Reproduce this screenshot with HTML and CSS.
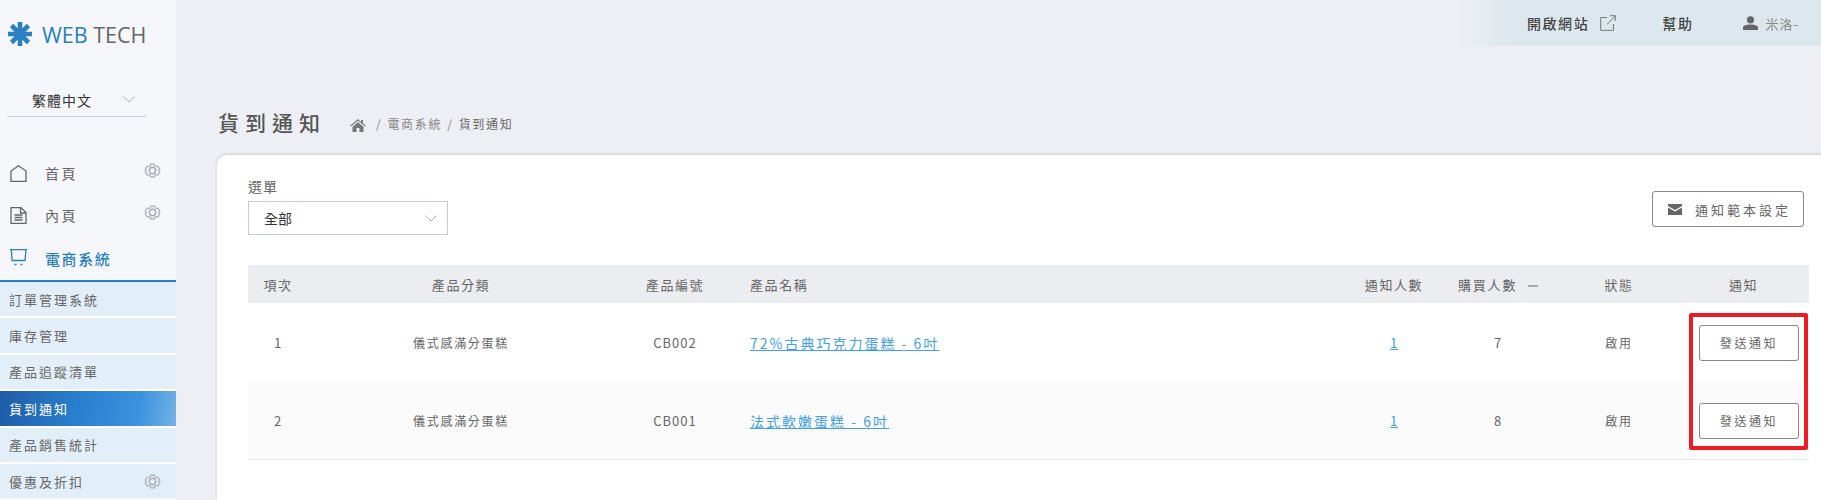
FILE: index.html
```html
<!DOCTYPE html>
<html lang="zh-Hant">
<head>
  <meta charset="UTF-8">
  <title>貨到通知</title>
  <link rel="stylesheet" href="styles.css">
</head>
<body>
  <svg class="defs" width="0" height="0">
    <symbol id="gear" viewBox="0 0 16 16">
      <path d="M5.800.8h4.400l.6 2 1.300.7 2-.5 2.100 3.700-1.500 1.300 1.500 1.300-2.100 3.700-2-.5-1.300.7-.6 2H5.800l-.6-2-1.300-.7-2 .5L-.2 9.300 1.300 8-.2 6.700 1.900 3l2 .5 1.300-.7z" transform="translate(1.300 1.300) scale(.84)" fill="none" stroke="currentColor" stroke-width="1.300"/>
      <circle cx="8" cy="8" r="3" fill="none" stroke="currentColor" stroke-width="1.300"/>
    </symbol>
    <symbol id="chevron" viewBox="0 0 12 7">
      <path d="M.5.5 6 6l5.500-5.500" fill="none" stroke="currentColor"/>
    </symbol>
  </svg>

  <!-- Sidebar -->
  <aside class="sidebar">
    <div class="logo">
      <svg class="logo-mark" viewBox="0 0 24 24">
        <g stroke="#2a80c0" stroke-width="4.600">
          <path d="M12 0v24M0 12h24M3.500 3.500l17 17M20.500 3.500l-17 17"/>
        </g>
      </svg>
      <span class="logo-text"><b>WEB</b> TECH</span>
    </div>

    <div class="lang">
      <span>繁體中文</span>
      <svg class="chevron"><use href="#chevron"/></svg>
    </div>

    <nav class="menu">
      <div class="menu-item">
        <svg class="menu-icon" viewBox="0 0 17 17"><path d="M1 6 8.500 .8 16 6v10.300H1z" fill="none" stroke="currentColor" stroke-width="1.300"/></svg>
        <span class="menu-label">首頁</span>
        <svg class="gear"><use href="#gear"/></svg>
      </div>
      <div class="menu-item">
        <svg class="menu-icon" viewBox="0 0 17 17"><path d="M1 .7h10L16 5.500v10.800H1zM10.500 1v5H16M4.500 8h8M4.500 10.500h8M4.500 13h8" fill="none" stroke="currentColor" stroke-width="1.300"/></svg>
        <span class="menu-label">內頁</span>
        <svg class="gear"><use href="#gear"/></svg>
      </div>
      <div class="menu-item current">
        <svg class="menu-icon" viewBox="0 0 17 17"><path d="M0 .6h17M1.300 .6 2 11.500h13L16 .6" fill="none" stroke="currentColor" stroke-width="1.300"/><path d="M4.500 15.500h2M10.500 15.500h2" stroke="currentColor" stroke-width="1.500"/></svg>
        <span class="menu-label">電商系統</span>
      </div>
      <div class="submenu">
        <a class="sub-item">訂單管理系統</a>
        <a class="sub-item">庫存管理</a>
        <a class="sub-item">產品追蹤清單</a>
        <a class="sub-item active">貨到通知</a>
        <a class="sub-item">產品銷售統計</a>
        <a class="sub-item">優惠及折扣<svg class="gear"><use href="#gear"/></svg></a>
      </div>
    </nav>
  </aside>

  <div class="main">
    <!-- Top bar -->
    <header class="topbar">
      <a class="top-link">開啟網站
        <svg class="ext-icon" viewBox="0 0 16 16"><path d="M7 2.500H.7v12.800h12.800V9M7 9.500 15.300.7M10 .7h5.300V6" fill="none" stroke="currentColor"/></svg>
      </a>
      <a class="top-link help">幫助</a>
      <a class="top-user">
        <svg class="user-icon" viewBox="0 0 15 14"><circle cx="7.500" cy="3.800" r="3.600" fill="currentColor"/><path d="M0 14v-2.500C0 9.500 3.500 8.500 7.500 8.500s7.500 1 7.500 3V14z" fill="currentColor"/></svg>
        米洛-
      </a>
    </header>

    <!-- Title -->
    <div class="page-head">
      <h1>貨到通知</h1>
      <div class="crumbs">
        <svg class="home-icon" viewBox="0 0 16 13"><path d="M8 0 0 6.800l.8.800L8 1.700l7.200 5.900.8-.8-3-2.500V1h-2v2z" fill="currentColor"/><path d="M2.500 7.800 8 3.200l5.500 4.600V13H9.500V9h-3v4h-4z" fill="currentColor"/></svg>
        <span class="sep">/</span><span>電商系統</span><span class="sep">/</span><span class="crumb-now">貨到通知</span>
      </div>
    </div>

    <!-- Card -->
    <section class="card">
      <div class="toolbar">
        <div class="filter">
          <label>選單</label>
          <div class="select">
            <span>全部</span>
            <svg class="chevron"><use href="#chevron"/></svg>
          </div>
        </div>
        <button class="btn btn-template">
          <svg class="mail-icon" viewBox="0 0 14 11"><path d="M0 0h14v2L7 6 0 2z" fill="currentColor"/><path d="M0 3.500 7 7.500l7-4V11H0z" fill="currentColor"/></svg>
          通知範本設定
        </button>
      </div>

      <div class="table-wrap">
        <table>
          <colgroup>
            <col class="c-no"><col class="c-cat"><col class="c-code"><col class="c-name">
            <col class="c-notify"><col class="c-buy"><col class="c-state"><col class="c-send">
          </colgroup>
          <thead>
            <tr>
              <th>項次</th>
              <th>產品分類</th>
              <th>產品編號</th>
              <th class="left">產品名稱</th>
              <th>通知人數</th>
              <th class="buy-head">購買人數<i class="dash"></i></th>
              <th>狀態</th>
              <th class="send-head">通知</th>
            </tr>
          </thead>
          <tbody>
            <tr>
              <td>1</td>
              <td class="small">儀式感滿分蛋糕</td>
              <td>CB002</td>
              <td class="left"><a class="name-link">72%古典巧克力蛋糕 - 6吋</a></td>
              <td><a class="num-link">1</a></td>
              <td class="buy">7</td>
              <td class="small">啟用</td>
              <td><button class="btn btn-send">發送通知</button></td>
            </tr>
            <tr class="alt">
              <td>2</td>
              <td class="small">儀式感滿分蛋糕</td>
              <td>CB001</td>
              <td class="left"><a class="name-link">法式軟嫩蛋糕 - 6吋</a></td>
              <td><a class="num-link">1</a></td>
              <td class="buy">8</td>
              <td class="small">啟用</td>
              <td><button class="btn btn-send">發送通知</button></td>
            </tr>
          </tbody>
        </table>
        <div class="highlight"></div>
      </div>
    </section>
  </div>
</body>
</html>
```

FILE: styles.css
```css
html, body {
  margin: 0;
  padding: 0;
  height: 100%;
  overflow: hidden;
}

body {
  display: flex;
  background: #eeeff4;
  color: #555;
  font-family: "Noto Sans CJK TC", "Noto Sans", sans-serif;
  font-size: 13px;
}

.defs {
  position: absolute;
}

/* Sidebar */
.sidebar {
  width: 176px;
  flex: none;
  background: #f6f7fa;
  height: 500px;
  overflow: hidden;
}

.logo {
  display: flex;
  align-items: center;
  gap: 10px;
  padding: 22px 0 0 8px;
  height: 24px;
}

.logo-mark {
  width: 24px;
  height: 24px;
}

.logo-text {
  font-family: "Open Sans", sans-serif;
  font-size: 21.500px;
  color: #666;
  white-space: nowrap;
}

.logo-text b {
  font-weight: 400;
  color: #2a80c0;
}

.lang {
  margin: 37px 30px 0 7px;
  height: 33px;
  border-bottom: 1px solid #c9cbd6;
  display: flex;
  justify-content: space-between;
  align-items: center;
  padding: 0 11px 0 25px;
  font-size: 14px;
  color: #333;
  letter-spacing: 1px;
}

.chevron {
  width: 12px;
  height: 7px;
  color: #b5b8c4;
}

.menu {
  margin-top: 35px;
}

.menu-item {
  display: flex;
  align-items: center;
  height: 42px;
  padding-left: 10px;
  color: #666;
}

.menu-icon {
  width: 17px;
  height: 17px;
  flex: none;
}

.menu-label {
  margin-left: 18px;
  font-size: 14px;
  letter-spacing: 2.600px;
}

.gear {
  width: 17px;
  height: 17px;
  color: #a9acb5;
  margin-left: auto;
  margin-right: 15px;
  margin-top: -5px;
}

.current {
  color: #2a80c0;
}

.current .menu-label {
  font-size: 15px;
  font-weight: 500;
  letter-spacing: 1.600px;
  padding-top: 2px;
}

.submenu {
  border-top: 2px solid #2a7fc4;
  margin-top: 2px;
  display: flex;
  flex-direction: column;
  gap: 2px;
  background: #fff;
}

.sub-item {
  display: flex;
  align-items: center;
  height: 34.400px;
  padding-left: 9px;
  background: #e3eff8;
  color: #666;
  font-size: 13px;
  letter-spacing: 2px;
}

.sub-item .gear {
  margin-top: 0;
}

.sub-item.active {
  color: #fff;
  background: linear-gradient(100deg, #1f5ca6 0%, #2a80d0 45%, #3c92de 78%, #74b2e6 100%);
}

/* Top bar */
.main {
  flex: 1;
  min-width: 0;
}

.topbar {
  height: 46px;
  display: flex;
  justify-content: flex-end;
  align-items: center;
  width: 365px;
  margin-left: auto;
  padding-right: 22px;
  box-sizing: border-box;
  background: linear-gradient(90deg, #eeeff4 0, #dde8ee 55px);
}

.top-link {
  display: flex;
  align-items: center;
  font-size: 14px;
  font-weight: 500;
  letter-spacing: 1.600px;
  color: #444;
}

.ext-icon {
  width: 16px;
  height: 16px;
  margin-left: 11px;
  color: #777;
}

.help {
  margin-left: 46px;
}

.top-user {
  display: flex;
  align-items: center;
  margin-left: 50px;
  font-size: 13px;
  letter-spacing: 1px;
  color: #888;
}

.user-icon {
  width: 15px;
  height: 14px;
  margin-right: 7px;
  color: #666;
}

/* Title and crumbs */
.page-head {
  display: flex;
  align-items: center;
  height: 109px;
  box-sizing: border-box;
  padding: 43px 0 0 42px;
}

h1 {
  margin: 0;
  font-size: 21px;
  font-weight: 500;
  letter-spacing: 6px;
  color: #555;
}

.crumbs {
  display: flex;
  align-items: center;
  margin: 3px 0 0 24px;
  font-size: 12px;
  letter-spacing: 1.700px;
  color: #888;
}

.home-icon {
  width: 16px;
  height: 13px;
  margin: 3px 5px 0 0;
  color: #777;
}

.sep {
  margin: 0 5px;
}

.crumb-now {
  color: #666;
}

/* Card */
.card {
  margin-left: 41px;
  height: 345px;
  padding: 23px 12px 0 31px;
  box-sizing: border-box;
  background: #fff;
  border-top-left-radius: 10px;
  box-shadow: 0 -1px 3px rgba(90, 90, 110, 0.25);
}

.toolbar {
  display: flex;
  justify-content: space-between;
  height: 87px;
}

.filter label {
  display: block;
  font-size: 14px;
  letter-spacing: 1px;
  color: #666;
  line-height: 16px;
  height: 23px;
}

.select {
  width: 200px;
  height: 34px;
  box-sizing: border-box;
  border: 1px solid #c8cad6;
  padding: 0 10px 0 15px;
  display: flex;
  justify-content: space-between;
  align-items: center;
  font-size: 14px;
  color: #333;
}

.btn {
  background: #fff;
  border: 1px solid #888;
  border-radius: 3px;
  font-family: inherit;
  color: #666;
  box-sizing: border-box;
  padding: 0;
}

.btn-template {
  width: 152px;
  height: 36px;
  margin: 13px 5px 0 0;
  font-size: 13px;
  letter-spacing: 3px;
  display: flex;
  align-items: center;
  padding-left: 15px;
}

.mail-icon {
  width: 14px;
  height: 11px;
  margin-right: 13px;
  color: #666;
}

.btn-send {
  width: 100px;
  height: 36px;
  font-size: 12px;
  letter-spacing: 2.600px;
}

/* Table */
.table-wrap {
  position: relative;
}

table {
  width: 100%;
  table-layout: fixed;
  border-collapse: collapse;
}

.c-no { width: 60px; }
.c-cat { width: 306px; }
.c-code { width: 122px; }
.c-notify { width: 100px; }
.c-buy { width: 108px; }
.c-state { width: 134px; }
.c-send { width: 123px; }

th {
  height: 38px;
  padding: 0;
  background: #ecedf0;
  font-size: 13px;
  font-weight: 400;
  letter-spacing: 1.600px;
  color: #666;
}

td {
  height: 79px;
  padding: 0;
  text-align: center;
  font-size: 13px;
  letter-spacing: 1px;
  color: #666;
}

.alt td {
  height: 77px;
  background: #fbfbfb;
  border-bottom: 1px solid #e8e9ec;
}

.small {
  font-size: 12px;
  letter-spacing: 1.700px;
}

th.left, td.left {
  text-align: left;
  padding-left: 14px;
}

.name-link {
  font-size: 14px;
  letter-spacing: 2px;
  color: #42a0ea;
  text-decoration: underline;
}

.num-link {
  color: #42a0ea;
  text-decoration: underline;
}

.buy-head {
  text-align: left;
  padding-left: 14px;
  letter-spacing: 1.800px;
}

.dash {
  display: inline-block;
  width: 10px;
  height: 2px;
  margin-left: 11px;
  vertical-align: middle;
  background: #aaa;
}

td:last-child {
  padding-left: 3px;
}

.send-head {
  padding-right: 8px;
}

.highlight {
  position: absolute;
  top: 48px;
  right: 1px;
  width: 119px;
  height: 137px;
  box-sizing: border-box;
  border: 4px solid #ed1c24;
  border-radius: 2px;
}
```
